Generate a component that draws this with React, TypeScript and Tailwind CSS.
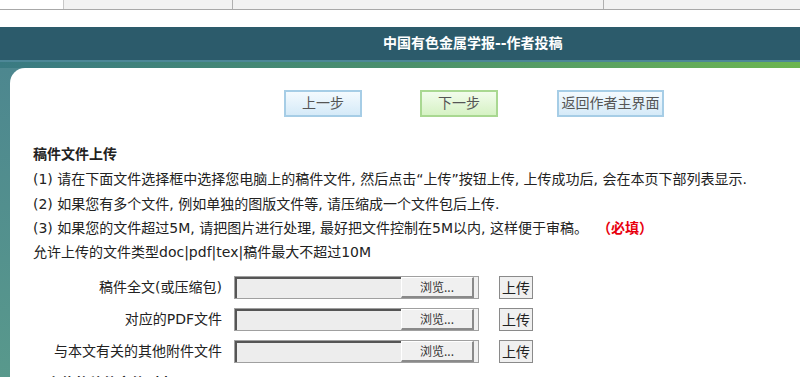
const font = "font-['DejaVu_Sans','Noto_Sans_CJK_SC',sans-serif]";

function TopStrip() {
  return (
    <div className="h-[10px] flex bg-[#f2f2f2] border-b border-[#a8a8a8]">
      <div className="w-[64px] bg-white border-r border-[#c8c8c8]" />
      <div className="w-[167px] border-r border-[#b0b0b0] ml-[2px]" />
      <div className="w-[371px] border-r border-[#b0b0b0]" />
      <div className="flex-1" />
    </div>
  );
}

function Header() {
  return (
    <>
      <div className="h-[17px] bg-white" />
      <div className="h-[33px] bg-[#2c5b6b] flex items-center">
        <span className={`ml-[383px] text-white font-bold text-[14px] ${font}`}>
          中国有色金属学报--作者投稿
        </span>
      </div>
      <div className="h-[2px] bg-[#4d8797]" />
      <div className="h-[6px] bg-gradient-to-r from-[#3a7a82] via-[#4a8f6c] to-[#6cb54f]" />
    </>
  );
}

function NavButton({ label, green, width }: { label: string; green?: boolean; width: string }) {
  return (
    <button
      className={`${width} h-[27px] border-2 text-[14px] text-[#555] ${font} ${
        green
          ? "border-[#a9d891] bg-gradient-to-b from-[#f2fcec] to-[#d6f2c4]"
          : "border-[#a6cde6] bg-gradient-to-b from-[#f4fafe] to-[#d5eaf8]"
      }`}
    >
      {label}
    </button>
  );
}

function FileRow({ label }: { label: string }) {
  return (
    <div className="h-[32px] flex items-center">
      <div className={`w-[212px] text-right text-[14px] text-[#222] ${font}`}>{label}</div>
      <div className="ml-[12px] w-[245px] h-[23px] flex border border-[#a0a0a0] bg-[#f0f0f0]">
        <div className="w-[166px] border-t-2 border-l-2 border-[#555] bg-[#ededed]" />
        <div className="w-[73px] flex items-center justify-center border-b-2 border-r-2 border-[#8a8a8a] border-t border-l border-t-white border-l-white text-[12px] text-[#333] font-['Noto_Sans_CJK_SC',sans-serif]">
          浏览...
        </div>
      </div>
      <button className="ml-[20px] w-[34px] h-[23px] border border-[#8a8a8a] bg-[#f0f0f0] text-[14px] text-[#222] font-['Noto_Sans_CJK_SC',sans-serif] leading-none">
        上传
      </button>
    </div>
  );
}

export default function App() {
  return (
    <div className="w-[800px] h-[377px] overflow-hidden bg-white">
      <TopStrip />
      <Header />
      <div className="h-[400px] bg-gradient-to-b from-[#4d878f] to-[#5c9e8b] pl-[10px]">
        <div className="h-full bg-white rounded-tl-[15px] pt-[22px]">
          <div className="flex ml-[274px]">
            <NavButton label="上一步" width="w-[78px]" />
            <div className="ml-[58px]">
              <NavButton label="下一步" green width="w-[78px]" />
            </div>
            <div className="ml-[59px]">
              <NavButton label="返回作者主界面" width="w-[107px]" />
            </div>
          </div>
          <div className={`pl-[23px] mt-[24px] text-[14px] text-[#222] ${font}`}>
            <div className="font-bold leading-[26px]">稿件文件上传</div>
            <div className="leading-[25px]">
              (1) 请在下面文件选择框中选择您电脑上的稿件文件, 然后点击“上传”按钮上传, 上传成功后, 会在本页下部列表显示.
            </div>
            <div className="leading-[24px]">(2) 如果您有多个文件, 例如单独的图版文件等, 请压缩成一个文件包后上传.</div>
            <div className="leading-[24px]">
              (3) 如果您的文件超过5M, 请把图片进行处理, 最好把文件控制在5M以内, 这样便于审稿。
              <span className="ml-[16px] text-[#e8000e] font-bold">（必填）</span>
            </div>
            <div className="leading-[25px]">允许上传的文件类型doc|pdf|tex|稿件最大不超过10M</div>
          </div>
          <div className="mt-[6px]">
            <FileRow label="稿件全文(或压缩包)" />
            <FileRow label="对应的PDF文件" />
            <FileRow label="与本文有关的其他附件文件" />
          </div>
          <div className={`pl-[23px] mt-[6px] text-[14px] font-bold text-[#222] ${font}`}>
            已上传的稿件文件列表
          </div>
        </div>
      </div>
    </div>
  );
}
